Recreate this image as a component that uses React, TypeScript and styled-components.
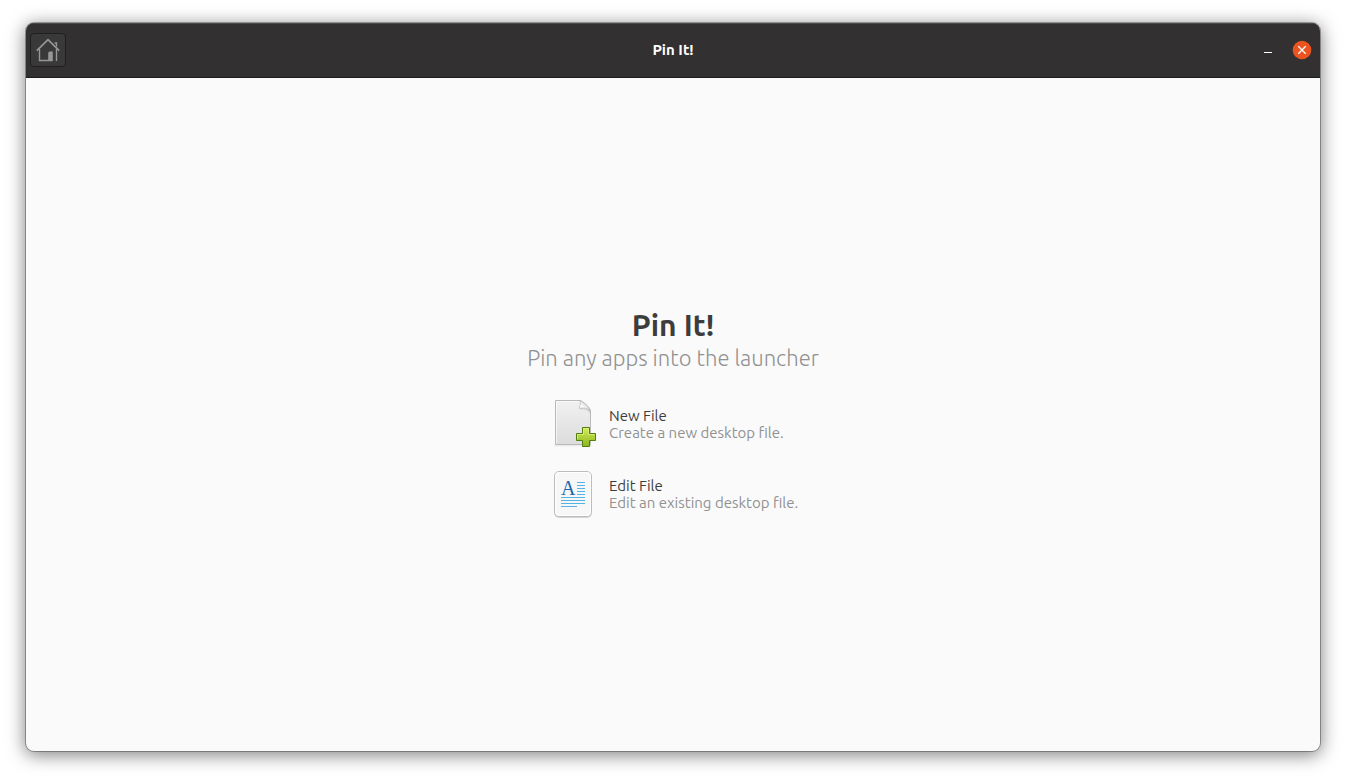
import React from "react";
import styled, { createGlobalStyle } from "styled-components";

const GlobalStyle = createGlobalStyle`
  *, *::before, *::after { box-sizing: border-box; }
  body {
    margin: 0;
    background: #ffffff;
    font-family: Ubuntu, "Noto Sans", "Open Sans", sans-serif;
  }
`;

const Desktop = styled.div`
  display: flex;
  min-height: 100vh;
  padding: 23px 26px 29px;
`;

const AppWindow = styled.div`
  display: flex;
  flex: 1;
  flex-direction: column;
  overflow: hidden;
  border-radius: 8px;
  background: #fafafa;
  box-shadow: 0 0 0 1px rgba(0, 0, 0, 0.3), 0 3px 18px 1px rgba(0, 0, 0, 0.5);
`;

const HeaderBar = styled.header`
  display: grid;
  grid-template-columns: 1fr auto 1fr;
  align-items: center;
  height: 55px;
  padding: 0 4px;
  background: #323030;
  border-bottom: 1px solid #1c1b1b;
  box-shadow: inset 0 1px 0 #4b4949;
`;

const WindowTitle = styled.span`
  color: #ffffff;
  font-size: 15px;
  font-weight: 700;
  line-height: 20px;
`;

const HomeButton = styled.button`
  display: flex;
  align-items: center;
  justify-content: center;
  width: 36px;
  height: 34px;
  padding: 0;
  border: 1px solid #212020;
  border-radius: 4px;
  background: #3a3939;
`;

const WindowControls = styled.div`
  display: flex;
  justify-content: flex-end;
  gap: 14px;
  padding-right: 4px;
`;

const ControlButton = styled.button`
  display: flex;
  width: 20px;
  height: 20px;
  padding: 0;
  border: 0;
  background: transparent;
`;

const Welcome = styled.main`
  display: flex;
  flex: 1;
  flex-direction: column;
  align-items: center;
  justify-content: center;
  padding-top: 6px;
`;

const Heading = styled.h1`
  margin: 0;
  color: #3d3d3d;
  font-size: 30px;
  font-weight: 700;
  line-height: 36px;
`;

const Subtitle = styled.p`
  margin: 0 0 16px;
  color: #919191;
  font-size: 22px;
  font-weight: 300;
  line-height: 30px;
`;

const Action = styled.button`
  display: flex;
  align-items: center;
  gap: 12px;
  width: 248px;
  height: 70px;
  padding: 0;
  border: 0;
  background: transparent;
  font-family: inherit;
  text-align: left;
  white-space: nowrap;
`;

const ActionIcon = styled.svg`
  flex: none;
  width: 48px;
  height: 48px;
`;

const ActionText = styled.span`
  display: flex;
  flex-direction: column;
  font-size: 15px;
  line-height: 17px;
`;

const ActionTitle = styled.span`
  color: #3d3d3d;
`;

const ActionDetail = styled.span`
  color: #919191;
`;

const HomeIcon = () => (
  <svg width="24" height="24" viewBox="0 0 24 24" fill="none" stroke="#979696" aria-hidden="true">
    <path d="M.8 12.6 12 1.6l11.2 11" strokeWidth="1.7" />
    <path d="M3.5 11v11.5h13M20.5 11v12" strokeWidth="1.4" />
    <path d="M18.5 5h2v3.5" strokeWidth="1.4" />
    <path d="M12.2 23v-8.2l1.200-1.200h3.400V23z" fill="#979696" stroke="none" />
  </svg>
);

const MinimizeIcon = () => (
  <svg width="20" height="20" viewBox="0 0 20 20" aria-hidden="true">
    <path d="M6 12h8v1H6z" fill="#ffffff" />
  </svg>
);

const CloseIcon = () => (
  <svg width="20" height="20" viewBox="0 0 20 20" aria-hidden="true">
    <circle cx="10" cy="10" r="9.3" fill="#e95420" />
    <path d="m6.3 6.3 7.4 7.4m0-7.4-7.4 7.4" stroke="#ffffff" strokeWidth="1.3" />
  </svg>
);

const NewFileIcon = () => (
  <ActionIcon viewBox="0 0 48 48" aria-hidden="true">
    <defs>
      <linearGradient id="paper" x1="0" y1="0" x2="0" y2="1">
        <stop offset="0" stopColor="#f1f1f1" />
        <stop offset="1" stopColor="#dcdcdc" />
      </linearGradient>
      <linearGradient id="fold" x1="0" y1="1" x2="1" y2="0">
        <stop offset="0.3" stopColor="#ffffff" />
        <stop offset="0.7" stopColor="#d8d8d8" />
      </linearGradient>
      <linearGradient id="plus" x1="0" y1="0" x2="0" y2="1">
        <stop offset="0" stopColor="#d6ec5c" />
        <stop offset="1" stopColor="#8ab71b" />
      </linearGradient>
    </defs>
    <path d="M5 45.5h38" stroke="#000000" strokeOpacity="0.06" strokeWidth="2" />
    <path d="M6.5.5H31c3 1 9.5 6.5 10.5 10v34h-35z" fill="url(#paper)" stroke="#b9b9b9" />
    <path d="M7.5 43.5v-42H30" fill="none" stroke="#ffffff" strokeOpacity="0.6" />
    <path d="M29.5 9.5c4-.5 9-.5 11.5 3.5v-3l-9-2z" fill="#000000" fillOpacity="0.14" />
    <path d="M31 .8c.6 2 .2 4.500-.8 7.400 4-.3 8.500-.4 11 2.600C40 7 34 1.500 31 .8z" fill="url(#fold)" stroke="#adadad" strokeWidth="0.6" />
    <path d="M33.5 27.5h7v6h6v7h-6v6h-7v-6h-6v-7h6z" fill="url(#plus)" stroke="#527d12" strokeLinejoin="round" />
    <path d="M28.5 39.5v-5h6v-6h5v6h6" fill="none" stroke="#e7f58c" strokeOpacity="0.6" />
  </ActionIcon>
);

const Letter = styled.text`
  font-family: "Liberation Serif", serif;
  font-size: 20px;
`;

const EditFileIcon = () => (
  <ActionIcon viewBox="0 0 48 48" aria-hidden="true">
    <rect x="5" y="2" width="38" height="46" rx="5" fill="#000000" fillOpacity="0.14" />
    <rect x="5.5" y="1.5" width="37" height="45" rx="4.5" fill="#f7f7f7" stroke="#bdbdbd" />
    <rect x="6.5" y="2.5" width="35" height="43" rx="3.5" fill="none" stroke="#ffffff" />
    <Letter x="12" y="25" fill="#1a66ae">A</Letter>
    <path
      d="M28 12.5h8M28 15.5h8M28 18.5h8M28 21.5h8M28 24.5h8M12 27.5h24M12 30.5h24M12 33.5h24M12 36.5h16"
      stroke="#55b4e5"
    />
  </ActionIcon>
);

const actions = [
  { title: "New File", detail: "Create a new desktop file.", Icon: NewFileIcon },
  { title: "Edit File", detail: "Edit an existing desktop file.", Icon: EditFileIcon },
];

export default function App() {
  return (
    <>
      <GlobalStyle />
      <Desktop>
        <AppWindow>
          <HeaderBar>
            <HomeButton type="button" aria-label="Home">
              <HomeIcon />
            </HomeButton>
            <WindowTitle>Pin It!</WindowTitle>
            <WindowControls>
              <ControlButton type="button" aria-label="Minimize">
                <MinimizeIcon />
              </ControlButton>
              <ControlButton type="button" aria-label="Close">
                <CloseIcon />
              </ControlButton>
            </WindowControls>
          </HeaderBar>
          <Welcome>
            <Heading>Pin It!</Heading>
            <Subtitle>Pin any apps into the launcher</Subtitle>
            {actions.map(({ title, detail, Icon }) => (
              <Action key={title} type="button">
                <Icon />
                <ActionText>
                  <ActionTitle>{title}</ActionTitle>
                  <ActionDetail>{detail}</ActionDetail>
                </ActionText>
              </Action>
            ))}
          </Welcome>
        </AppWindow>
      </Desktop>
    </>
  );
}
